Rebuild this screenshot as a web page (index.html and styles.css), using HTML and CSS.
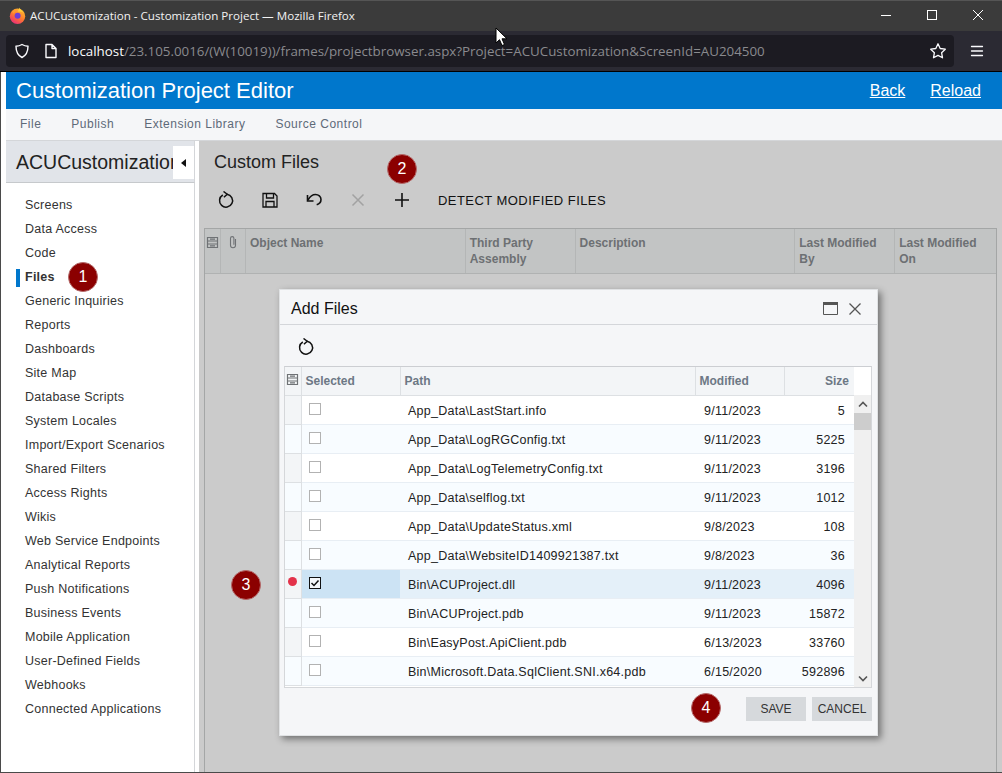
FILE: index.html
```html
<!DOCTYPE html>
<html lang="en">
<head>
    <meta charset="UTF-8">
    <meta name="viewport" content="width=device-width, initial-scale=1.0">
    <title>ACUCustomization - Customization Project</title>
    <link rel="stylesheet" href="styles.css">
</head>
<body>
    <div class="titlebar">
        <svg class="ff-logo" width="17" height="17" viewBox="0 0 17 17">
            <defs>
                <linearGradient id="ffg" x1="0.8" y1="0" x2="0.2" y2="1">
                    <stop offset="0" stop-color="#ffc22e"/>
                    <stop offset="0.5" stop-color="#ff7a2e"/>
                    <stop offset="1" stop-color="#e9267e"/>
                </linearGradient>
            </defs>
            <circle cx="8.500" cy="9.300" r="7.700" fill="url(#ffg)"/>
            <path d="M10.500 .5c.3 2 2.500 3 4 5-2-1-4-1.200-6-.8 1-1.400 1.800-2.700 2-4.200z" fill="#ffcf3a"/>
            <circle cx="8.600" cy="8.800" r="3" fill="#6d3fd6"/>
            <path d="M3 4.500c2-2 4-2 5.500-1.500-1.500 1-3 2-3.500 3.800-.8-.6-1.600-1.300-2-2.300z" fill="#ff9a30"/>
        </svg>
        <span class="window-title">ACUCustomization - Customization Project — Mozilla Firefox</span>
        <div class="window-btns">
            <svg width="12" height="12" viewBox="0 0 12 12"><path d="M1 6.500h10" stroke="#fff" stroke-width="1"/></svg>
            <svg width="12" height="12" viewBox="0 0 12 12"><rect x="1.500" y="1.500" width="9" height="9" fill="none" stroke="#fff" stroke-width="1"/></svg>
            <svg width="12" height="12" viewBox="0 0 12 12"><path d="M1 1l10 10M11 1L1 11" stroke="#fff" stroke-width="1"/></svg>
        </div>
    </div>
    <div class="navbar">
        <div class="urlbar">
            <svg width="16" height="16" viewBox="0 0 16 16"><path d="M8 1.500c2 1.200 3.800 1.700 6 1.800 0 5-1.500 9-6 11.200C3.500 12.300 2 8.300 2 3.300c2.200-.1 4-.6 6-1.800z" fill="none" stroke="#fbfbfe" stroke-width="1.400"/></svg>
            <svg class="page-icon" width="14" height="16" viewBox="0 0 14 16"><path d="M2 1.500h6l4 4v9H2z M8 1.500v4h4" fill="none" stroke="#fbfbfe" stroke-width="1.400" stroke-linejoin="round"/></svg>
            <span class="url"><span class="url-host">localhost</span>/23.105.0016/(W(10019))/frames/projectbrowser.aspx?Project=ACUCustomization&amp;ScreenId=AU204500</span>
            <svg class="star" width="18" height="18" viewBox="0 0 18 18"><path d="M9 1.800l2.200 4.700 5.100.7-3.700 3.500.9 5.100L9 13.400l-4.500 2.400.9-5.100-3.700-3.500 5.100-.7z" fill="none" stroke="#fbfbfe" stroke-width="1.300" stroke-linejoin="round"/></svg>
        </div>
        <svg class="burger" width="14" height="12" viewBox="0 0 14 12"><path d="M1.500 1.500h11M1.500 6h11M1.500 10.500h11" stroke="#fbfbfe" stroke-width="1.300" stroke-linecap="round"/></svg>
    </div>

    <div class="page">
        <header class="app-header">
            <h1>Customization Project Editor</h1>
            <nav class="header-links">
                <a href="#">Back</a>
                <a href="#">Reload</a>
            </nav>
        </header>
        <div class="menu">
            <span>File</span>
            <span>Publish</span>
            <span>Extension Library</span>
            <span>Source Control</span>
        </div>
        <div class="workspace">
            <aside class="sidebar">
                <div class="side-head">
                    <span class="side-title">ACUCustomization</span>
                    <button class="collapse"><svg width="6" height="8" viewBox="0 0 6 8"><path d="M5 0v8L0 4z" fill="#111"/></svg></button>
                </div>
                <ul class="side-nav">
                    <li>Screens</li>
                    <li>Data Access</li>
                    <li>Code</li>
                    <li class="active">Files</li>
                    <li>Generic Inquiries</li>
                    <li>Reports</li>
                    <li>Dashboards</li>
                    <li>Site Map</li>
                    <li>Database Scripts</li>
                    <li>System Locales</li>
                    <li>Import/Export Scenarios</li>
                    <li>Shared Filters</li>
                    <li>Access Rights</li>
                    <li>Wikis</li>
                    <li>Web Service Endpoints</li>
                    <li>Analytical Reports</li>
                    <li>Push Notifications</li>
                    <li>Business Events</li>
                    <li>Mobile Application</li>
                    <li>User-Defined Fields</li>
                    <li>Webhooks</li>
                    <li>Connected Applications</li>
                </ul>
            </aside>
            <main class="content">
                <h2>Custom Files</h2>
                <div class="toolbar">
                    <svg class="tool" width="18" height="18" viewBox="0 0 18 18"><path d="M5.800 4a6.500 6.500 0 1 0 4.200-.8" fill="none" stroke="#111" stroke-width="1.500"/><path d="M6.500 .5l3.700 2.700-3.300 3" fill="none" stroke="#111" stroke-width="1.500"/></svg>
                    <svg class="tool" width="18" height="18" viewBox="0 0 18 18"><path d="M2 2.500h11.500l2.500 2.500v11H2z M5.500 2.500v4.500h7v-4.500 M5 16v-5.500h8V16" fill="none" stroke="#111" stroke-width="1.300"/></svg>
                    <svg class="tool" width="18" height="18" viewBox="0 0 18 18"><path d="M3 9C5 5.500 7.500 3.500 10.500 3.500c3 0 5.500 2.200 5.500 5 0 2.500-1.800 4.500-4.300 5.200" fill="none" stroke="#111" stroke-width="1.600"/><path d="M2.500 4v6h6" fill="none" stroke="#111" stroke-width="1.600"/></svg>
                    <svg class="tool" width="18" height="18" viewBox="0 0 18 18"><path d="M3.500 3.500l11 11M14.500 3.500l-11 11" stroke="#a2a2a2" stroke-width="1.500"/></svg>
                    <svg class="tool" width="18" height="18" viewBox="0 0 18 18"><path d="M9 2v14M2 9h14" stroke="#111" stroke-width="1.600"/></svg>
                    <span class="tool-text">DETECT MODIFIED FILES</span>
                </div>
                <div class="bg-grid">
                    <div class="bg-head">
                        <div class="bg-col w16"><svg width="13" height="13" viewBox="0 0 13 13"><path d="M1.500 1.500h10v10h-10z M1.500 5h10M1.500 8h10M4 3.200h5M4 9.800h5" fill="none" stroke="#6f7275" stroke-width="1.200"/></svg></div>
                        <div class="bg-col w25"><svg width="10" height="14" viewBox="0 0 10 14"><path d="M7.500 4v6.200a2.500 2.500 0 0 1-5 0V3.300a1.700 1.700 0 0 1 3.400 0v6.500" fill="none" stroke="#6f7275" stroke-width="1.100"/></svg></div>
                        <div class="bg-col w220">Object Name</div>
                        <div class="bg-col w110">Third Party<br>Assembly</div>
                        <div class="bg-col w220">Description</div>
                        <div class="bg-col w100">Last Modified<br>By</div>
                        <div class="bg-col w101">Last Modified<br>On</div>
                    </div>
                </div>
            </main>
        </div>
    </div>

    <section class="dialog">
        <div class="dialog-head">
            <span class="dialog-title">Add Files</span>
            <svg width="15" height="13" viewBox="0 0 15 13"><path d="M.5 .5h14v12H.5z" fill="none" stroke="#555" stroke-width="1"/><path d="M0 0h15v3H0z" fill="#555"/></svg>
            <svg class="dialog-x" width="14" height="14" viewBox="0 0 14 14"><path d="M1.500 1.500l11 11M12.500 1.500l-11 11" stroke="#555" stroke-width="1.300"/></svg>
        </div>
        <div class="dialog-tools">
            <svg width="18" height="18" viewBox="0 0 18 18"><path d="M5.800 4a6.500 6.500 0 1 0 4.200-.8" fill="none" stroke="#111" stroke-width="1.500"/><path d="M6.500 .5l3.700 2.700-3.300 3" fill="none" stroke="#111" stroke-width="1.500"/></svg>
        </div>
        <div class="files-box">
            <table class="files">
                <thead>
                    <tr>
                        <th class="c-ind"><svg width="13" height="13" viewBox="0 0 13 13"><path d="M1.500 1.500h10v10h-10z M1.500 5h10M1.500 8h10M4 3.200h5M4 9.800h5" fill="none" stroke="#6f7275" stroke-width="1.200"/></svg></th>
                        <th class="c-sel">Selected</th>
                        <th class="c-path">Path</th>
                        <th class="c-mod">Modified</th>
                        <th class="c-size">Size</th>
                    </tr>
                </thead>
                <tbody>
                    <tr><td class="ind"></td><td class="sel"><span class="check"></span></td><td class="path">App_Data\LastStart.info</td><td class="mod">9/11/2023</td><td class="size">5</td></tr>
                    <tr class="alt"><td class="ind"></td><td class="sel"><span class="check"></span></td><td class="path">App_Data\LogRGConfig.txt</td><td class="mod">9/11/2023</td><td class="size">5225</td></tr>
                    <tr><td class="ind"></td><td class="sel"><span class="check"></span></td><td class="path">App_Data\LogTelemetryConfig.txt</td><td class="mod">9/11/2023</td><td class="size">3196</td></tr>
                    <tr class="alt"><td class="ind"></td><td class="sel"><span class="check"></span></td><td class="path">App_Data\selflog.txt</td><td class="mod">9/11/2023</td><td class="size">1012</td></tr>
                    <tr><td class="ind"></td><td class="sel"><span class="check"></span></td><td class="path">App_Data\UpdateStatus.xml</td><td class="mod">9/8/2023</td><td class="size">108</td></tr>
                    <tr class="alt"><td class="ind"></td><td class="sel"><span class="check"></span></td><td class="path">App_Data\WebsiteID1409921387.txt</td><td class="mod">9/8/2023</td><td class="size">36</td></tr>
                    <tr class="picked"><td class="ind"><span class="dot"></span></td><td class="sel"><span class="check on"><svg width="10" height="10" viewBox="0 0 10 10"><path d="M1.500 5l2.500 2.500L8.500 2.500" fill="none" stroke="#111" stroke-width="1.500"/></svg></span></td><td class="path">Bin\ACUProject.dll</td><td class="mod">9/11/2023</td><td class="size">4096</td></tr>
                    <tr class="alt"><td class="ind"></td><td class="sel"><span class="check"></span></td><td class="path">Bin\ACUProject.pdb</td><td class="mod">9/11/2023</td><td class="size">15872</td></tr>
                    <tr><td class="ind"></td><td class="sel"><span class="check"></span></td><td class="path">Bin\EasyPost.ApiClient.pdb</td><td class="mod">6/13/2023</td><td class="size">33760</td></tr>
                    <tr class="alt"><td class="ind"></td><td class="sel"><span class="check"></span></td><td class="path">Bin\Microsoft.Data.SqlClient.SNI.x64.pdb</td><td class="mod">6/15/2020</td><td class="size">592896</td></tr>
                </tbody>
            </table>
            <div class="scroll">
                <div class="scroll-corner"></div>
                <div class="scroll-track">
                    <svg width="10" height="7" viewBox="0 0 10 7"><path d="M1 5.500l4-4 4 4" fill="none" stroke="#555" stroke-width="1.600"/></svg>
                    <div class="scroll-thumb"></div>
                    <svg class="scroll-down" width="10" height="7" viewBox="0 0 10 7"><path d="M1 1.500l4 4 4-4" fill="none" stroke="#555" stroke-width="1.600"/></svg>
                </div>
            </div>
        </div>
        <div class="dialog-foot">
            <button class="btn">SAVE</button>
            <button class="btn">CANCEL</button>
        </div>
    </section>

    <span class="badge b1">1</span>
    <span class="badge b2">2</span>
    <span class="badge b3">3</span>
    <span class="badge b4">4</span>

    <svg class="cursor" width="13" height="20" viewBox="0 0 13 20"><path d="M1 1v15l3.500-3.300 2.500 5.800 2.500-1-2.500-5.700h5z" fill="#fff" stroke="#000" stroke-width="1"/></svg>
</body>
</html>
```

FILE: styles.css
```css
* {
    box-sizing: border-box;
}

html, body {
    height: 100%;
}

body {
    position: relative;
    display: flex;
    flex-direction: column;
    margin: 0;
    height: 773px;
    overflow: hidden;
    background: #fff;
    box-shadow: inset 1px -1px 0 #4a4a4a;
    font-family: "Liberation Sans", Arial, sans-serif;
    color: #333;
}

/* browser chrome */
.titlebar {
    display: flex;
    align-items: center;
    height: 31px;
    flex: none;
    padding: 0 0 2px 9px;
    background: #3b3b3b;
    border-top: 1px solid #555;
}

.window-title {
    margin-left: 4px;
    font-family: "Open Sans", sans-serif;
    font-size: 11.6px;
    color: #f2f2f2;
}

.window-btns {
    display: flex;
    gap: 34px;
    margin-left: auto;
    padding-right: 18px;
}

.navbar {
    display: flex;
    align-items: center;
    flex: none;
    height: 41px;
    padding-left: 6px;
    background: #2b2a33;
    border-bottom: 1px solid #000;
}

.urlbar {
    display: flex;
    align-items: center;
    flex: none;
    width: 948px;
    height: 32px;
    padding: 0 7px 0 8px;
    background: #1c1b22;
    border-radius: 4px;
}

.page-icon {
    margin-left: 14px;
}

.url {
    margin-left: 10px;
    font-family: "Open Sans", sans-serif;
    font-size: 13.35px;
    color: #8a8a8e;
    white-space: nowrap;
}

.url-host {
    color: #fbfbfe;
}

.star {
    margin-left: auto;
}

.burger {
    flex: none;
    margin-left: 16px;
}

/* page */
.page {
    display: flex;
    flex-direction: column;
    flex: 1;
    min-height: 0;
    margin-left: 6px;
    border-bottom: 1px solid #4a4a4a;
}

.app-header {
    display: flex;
    align-items: center;
    justify-content: space-between;
    flex: none;
    height: 37px;
    padding: 0 21px 0 10px;
    background: #0077cc;
    color: #fff;
}

.app-header h1 {
    margin: 0;
    font-size: 22px;
    font-weight: normal;
}

.header-links {
    display: flex;
    gap: 25px;
}

.header-links a {
    font-size: 16px;
    color: #fff;
    text-decoration: underline;
}

.menu {
    display: flex;
    gap: 30px;
    align-items: center;
    flex: none;
    height: 32px;
    padding: 0 0 1px 14px;
    background: #f5f6f8;
    border-bottom: 1px solid #d4d6d9;
    font-size: 12px;
    letter-spacing: .5px;
    color: #5e6a78;
}

.workspace {
    display: flex;
    flex: 1;
    min-height: 0;
}

.sidebar {
    flex: none;
    width: 193px;
    background: #fff;
    border-right: 4px solid #fff;
}

.side-head {
    position: relative;
    height: 42px;
    padding-left: 10px;
    overflow: hidden;
    background: #e1e4e9;
    border-bottom: 1px solid #c6c9cc;
    border-right: 1px solid #d4d6d9;
    line-height: 42px;
    font-size: 19.5px;
    color: #222;
    white-space: nowrap;
}

.collapse {
    position: absolute;
    top: 5px;
    right: 0;
    display: flex;
    align-items: center;
    justify-content: center;
    width: 21px;
    height: 33px;
    padding: 0;
    background: #fff;
    border: 0;
}

.side-nav {
    margin: 0;
    padding: 10px 0 0 10px;
    height: calc(100% - 42px);
    list-style: none;
    border-right: 1px solid #d4d6d9;
}

.side-nav li {
    position: relative;
    height: 24px;
    padding-left: 9px;
    line-height: 24px;
    font-size: 12.5px;
    letter-spacing: .25px;
    color: #333;
}

.side-nav li.active {
    font-weight: bold;
}

.side-nav li.active::before {
    content: "";
    position: absolute;
    top: 4px;
    left: 0;
    width: 4px;
    height: 18px;
    background: #0077cc;
}

.content {
    flex: 1;
    min-width: 0;
    padding: 0 0 0 5px;
    background: #cbcbcb;
}

.content h2 {
    margin: 0;
    padding: 10px 0 0 10px;
    height: 40px;
    font-size: 18px;
    font-weight: normal;
    line-height: 22px;
    color: #222;
}

.toolbar {
    display: flex;
    align-items: center;
    gap: 26px;
    height: 38px;
    margin-bottom: 9px;
    padding: 0 0 0 13px;
}

.tool-text {
    margin: 1px 0 0 1px;
    font-size: 13px;
    letter-spacing: .45px;
    color: #111;
}

.bg-grid {
    height: 544px;
    margin-right: 5px;
    border: 1px solid #a4a6a6;
    border-bottom: 0;
}

.bg-head {
    display: flex;
    height: 45px;
    background: #c2c4c4;
    border-bottom: 1px solid #b0b2b2;
    font-size: 12px;
    font-weight: bold;
    line-height: 16px;
    color: #6d7073;
}

.bg-col {
    padding: 6px 4px 0;
    border-right: 1px solid #b4b6b6;
}

.bg-col:last-child {
    border-right: 0;
}

.w16 { width: 16px; padding: 7px 0 0 1px; }
.w25 { width: 25px; padding-left: 7px; }
.w220 { width: 220px; }
.w110 { width: 110px; }
.w100 { width: 100px; }
.w101 { width: 101px; }

/* dialog */
.dialog {
    position: absolute;
    top: 289px;
    left: 279px;
    display: flex;
    flex-direction: column;
    width: 599px;
    height: 447px;
    background: #f5f6f8;
    border: 1px solid #e0e2e4;
    box-shadow: 3px 3px 7px rgba(0, 0, 0, .45);
}

.dialog-head {
    display: flex;
    align-items: center;
    flex: none;
    height: 35px;
    padding: 3px 15px 0 11px;
    border-bottom: 1px solid #d4d6da;
}

.dialog-title {
    margin-right: auto;
    font-size: 16px;
    color: #111;
}

.dialog-x {
    margin-left: 10px;
}

.dialog-tools {
    flex: none;
    height: 41px;
    padding: 13px 0 0 17px;
}

.files-box {
    display: flex;
    flex: none;
    width: 588px;
    height: 322px;
    margin-left: 4px;
    background: #fff;
    border: 1px solid #d5d7da;
    border-top-color: #ccced2;
}

.files {
    width: 569px;
    flex: none;
    align-self: flex-start;
    table-layout: fixed;
    border-collapse: collapse;
    font-size: 12.5px;
}

.files th {
    height: 28px;
    padding: 0 4px;
    background: #f3f5f7;
    border-right: 1px solid #dde0e3;
    border-bottom: 1px solid #dde0e3;
    font-size: 12px;
    font-weight: bold;
    text-align: left;
    color: #6d7885;
}

.c-ind { width: 16px; padding: 0 !important; text-align: center !important; }
.c-sel { width: 99px; }
.c-path { width: 295px; }
.c-mod { width: 89px; }
.c-size { width: 70px; text-align: right !important; padding-right: 5px !important; border-right: 0 !important; }

.files td {
    height: 29px;
    padding: 3px 0 0;
    background: #fff;
    border-bottom: 1px solid #e8eef4;
    color: #222;
    letter-spacing: .25px;
}

.files tr.alt td {
    background: #f8fcff;
}

.files td.ind {
    padding: 0;
    background: #f3f5f7;
    border-right: 1px solid #dde0e3;
    border-bottom-color: #dde0e3;
}

.files td.sel {
    padding: 0 0 2px 7px;
}

.files td.path {
    padding-left: 8px;
}

.files td.mod {
    padding-left: 9px;
}

.files td.size {
    padding-right: 9px;
    text-align: right;
}

.files tr.picked td {
    background: #e4f0f9;
}

.files tr.picked td.sel {
    background: #cce3f4;
}

.files tr.picked td.ind {
    background: #f3f5f7;
}

.check {
    display: block;
    width: 12px;
    height: 12px;
    background: #fff;
    border: 1px solid #b2b2b2;
}

.check.on {
    display: flex;
    align-items: center;
    justify-content: center;
    border-color: #111;
    background: #f4f7fa;
}

.dot {
    display: block;
    width: 9px;
    height: 9px;
    margin: 0 0 5px 3px;
    background: #e3324a;
    border-radius: 50%;
}

.scroll {
    display: flex;
    flex-direction: column;
    flex: 1;
}

.scroll-corner {
    flex: none;
    height: 28px;
    background: #fff;
}

.scroll-track {
    display: flex;
    flex-direction: column;
    align-items: center;
    flex: 1;
    padding-top: 6px;
    background: #f0f0f0;
}

.scroll-thumb {
    flex: none;
    width: 100%;
    height: 17px;
    margin-top: 5px;
    background: #cdcdcd;
}

.scroll-down {
    margin-top: auto;
    margin-bottom: 5px;
}

.dialog-foot {
    display: flex;
    justify-content: flex-end;
    gap: 6px;
    padding: 9px 5px 0 0;
}

.btn {
    width: 60px;
    height: 24px;
    padding: 0;
    background: #d6d9dc;
    border: 0;
    font-family: "Liberation Sans", Arial, sans-serif;
    font-size: 12px;
    color: #333;
}

/* numbered callouts */
.badge {
    position: absolute;
    display: flex;
    align-items: center;
    justify-content: center;
    width: 30px;
    height: 30px;
    background: #8b0000;
    border: 1px solid #b56a6a;
    border-radius: 50%;
    font-size: 16px;
    color: #fff;
}

.b1 { top: 262px; left: 68px; }
.b2 { top: 154px; left: 387px; }
.b3 { top: 570px; left: 231px; }
.b4 { top: 693px; left: 691px; }

.cursor {
    position: absolute;
    top: 27px;
    left: 495px;
}
```
